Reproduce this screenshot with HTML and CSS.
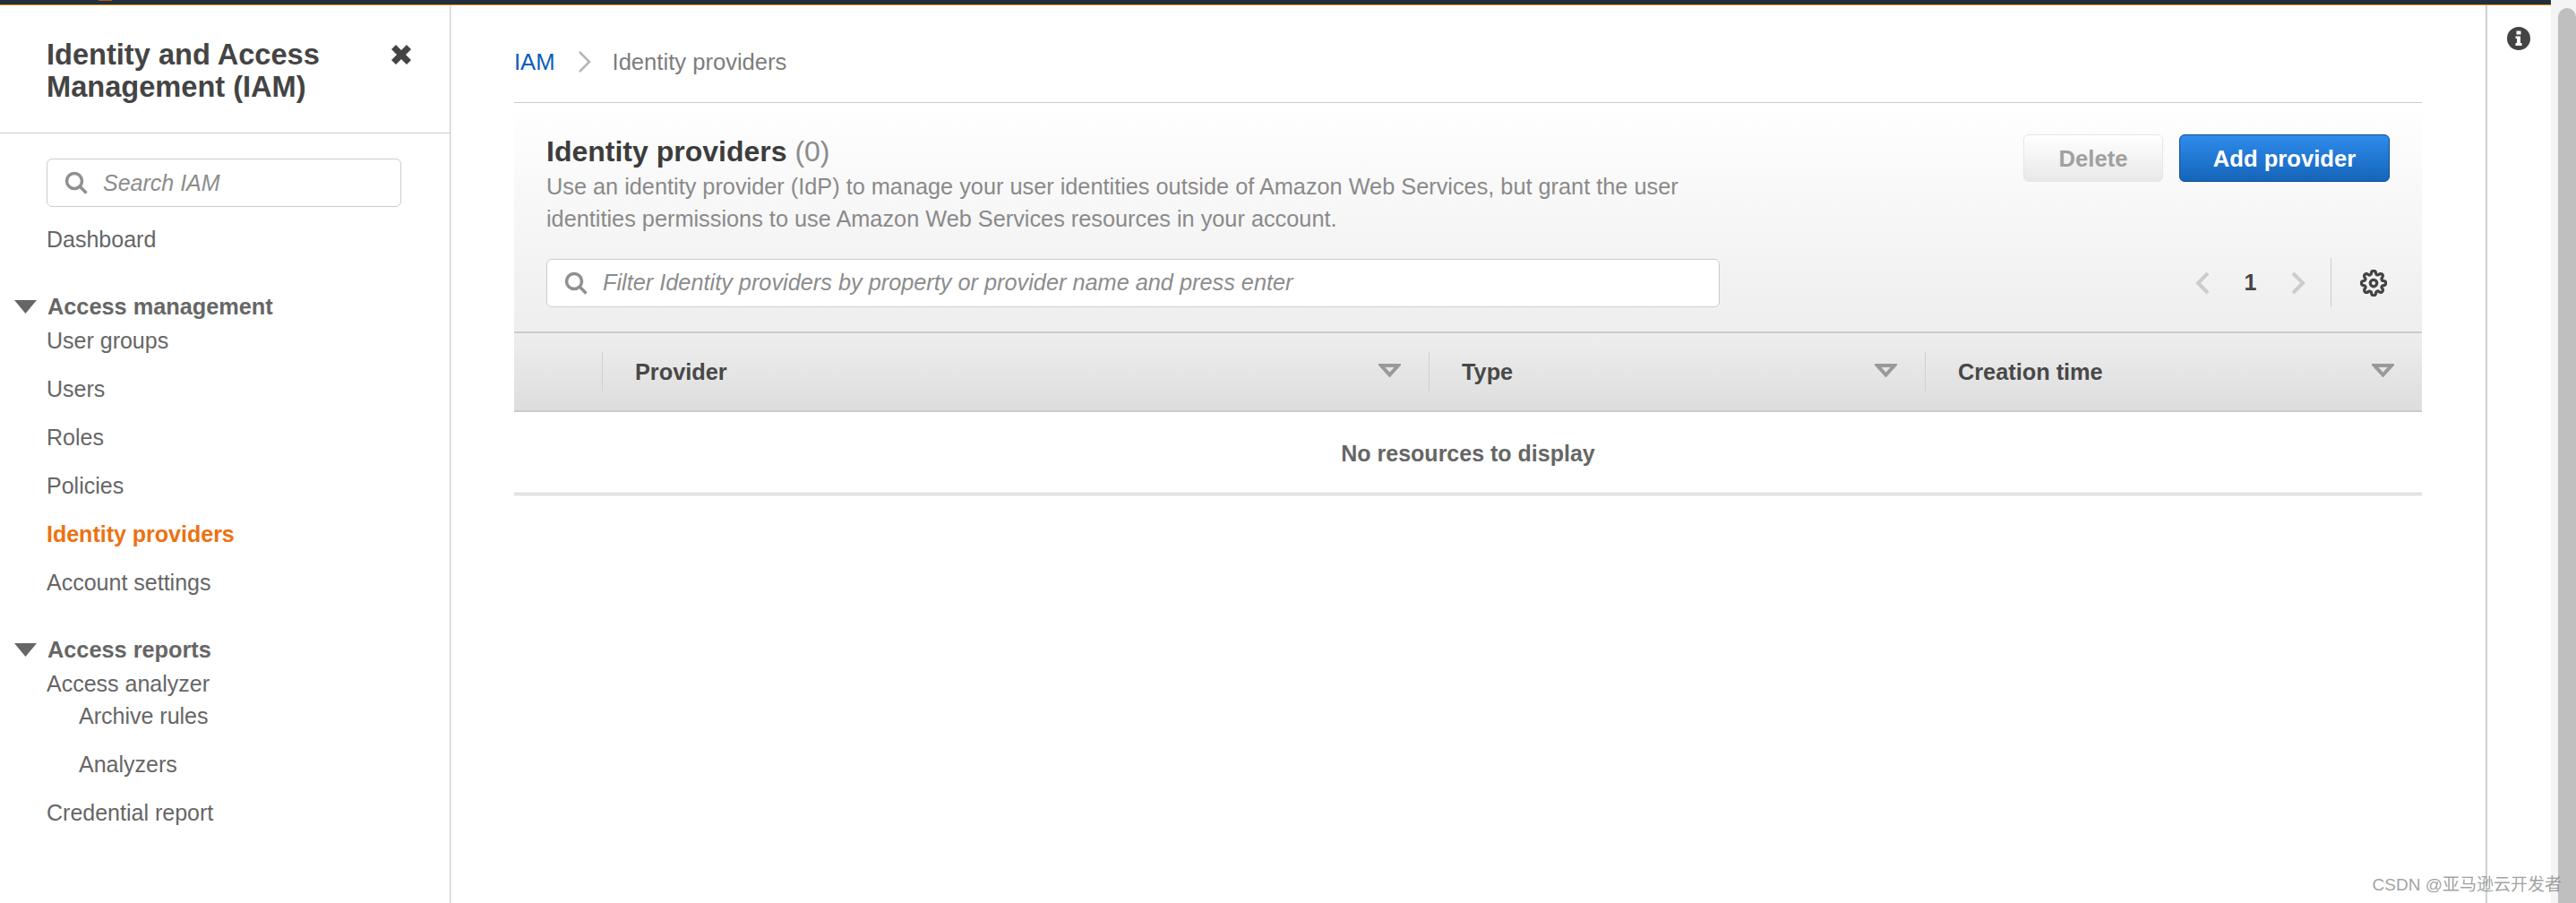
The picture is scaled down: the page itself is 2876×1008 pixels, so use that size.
FILE: index.html
```html
<!DOCTYPE html>
<html lang="en">
<head>
  <meta charset="UTF-8">
  <title>Identity providers</title>
  <link rel="stylesheet" href="styles.css">
</head>
<body>
  <div class="page">
    <div class="app">
      <div class="topbar"><span class="topbar-logo"></span></div>
      <div class="layout">
        <aside class="sidebar">
          <div class="sidebar-head">
            <h2>Identity and Access Management (IAM)</h2>
            <svg class="close-icon" viewBox="0 0 22 22"><path d="M5 0l6 6 6-6 5 5-6 6 6 6-5 5-6-6-6 6-5-5 6-6-6-6z"/></svg>
          </div>
          <nav class="sidebar-nav">
            <div class="search-box side-search">
              <svg class="search-icon" viewBox="0 0 26 26"><circle cx="11" cy="11" r="8.5"/><path d="M17 17l7.5 7.5"/></svg>
              <span>Search IAM</span>
            </div>
            <a href="#" class="nav-link">Dashboard</a>

            <div class="nav-title">
              <svg class="caret" viewBox="0 0 25 15"><path d="M0 0h25L12.5 15z"/></svg>
              Access management
            </div>
            <a href="#" class="nav-link">User groups</a>
            <a href="#" class="nav-link">Users</a>
            <a href="#" class="nav-link">Roles</a>
            <a href="#" class="nav-link">Policies</a>
            <a href="#" class="nav-link active">Identity providers</a>
            <a href="#" class="nav-link">Account settings</a>

            <div class="nav-title">
              <svg class="caret" viewBox="0 0 25 15"><path d="M0 0h25L12.5 15z"/></svg>
              Access reports
            </div>
            <a href="#" class="nav-link parent">Access analyzer</a>
            <a href="#" class="nav-link sub">Archive rules</a>
            <a href="#" class="nav-link sub">Analyzers</a>
            <a href="#" class="nav-link">Credential report</a>
          </nav>
        </aside>

        <main class="content">
          <div class="breadcrumb">
            <a href="#">IAM</a>
            <svg class="crumb-sep" viewBox="0 0 16 26"><path d="M2 2l11 11L2 24"/></svg>
            <span>Identity providers</span>
          </div>

          <section class="panel">
            <div class="panel-top">
              <div class="panel-text">
                <h1>Identity providers <span class="count">(0)</span></h1>
                <p>Use an identity provider (IdP) to manage your user identities outside of Amazon Web Services, but grant the user identities permissions to use Amazon Web Services resources in your account.</p>
              </div>
              <div class="panel-actions">
                <button class="btn btn-disabled">Delete</button>
                <button class="btn btn-primary">Add provider</button>
              </div>
            </div>
            <div class="panel-tools">
              <div class="search-box filter-search">
                <svg class="search-icon" viewBox="0 0 26 26"><circle cx="11" cy="11" r="8.5"/><path d="M17 17l7.5 7.5"/></svg>
                <span>Filter Identity providers by property or provider name and press enter</span>
              </div>
              <div class="pager">
                <svg class="chevron" viewBox="0 0 16 26"><path d="M14 2L3 13l11 11"/></svg>
                <span class="page-num">1</span>
                <svg class="chevron" viewBox="0 0 16 26"><path d="M2 2l11 11L2 24"/></svg>
                <span class="pager-sep"></span>
                <svg class="gear" viewBox="0 0 24 24"><circle cx="12" cy="12" r="3"/><path d="M19.4 15a1.65 1.65 0 0 0 .33 1.82l.06.06a2 2 0 0 1 0 2.83 2 2 0 0 1-2.83 0l-.06-.06a1.65 1.65 0 0 0-1.82-.33 1.65 1.65 0 0 0-1 1.51V21a2 2 0 0 1-2 2 2 2 0 0 1-2-2v-.09A1.65 1.65 0 0 0 9 19.4a1.65 1.65 0 0 0-1.82.33l-.06.06a2 2 0 0 1-2.83 0 2 2 0 0 1 0-2.83l.06-.06a1.65 1.65 0 0 0 .33-1.82 1.65 1.65 0 0 0-1.51-1H3a2 2 0 0 1-2-2 2 2 0 0 1 2-2h.09A1.65 1.65 0 0 0 4.6 9a1.65 1.65 0 0 0-.33-1.82l-.06-.06a2 2 0 0 1 0-2.83 2 2 0 0 1 2.83 0l.06.06a1.65 1.65 0 0 0 1.82.33H9a1.65 1.65 0 0 0 1-1.51V3a2 2 0 0 1 2-2 2 2 0 0 1 2 2v.09a1.65 1.65 0 0 0 1 1.51 1.65 1.65 0 0 0 1.82-.33l.06-.06a2 2 0 0 1 2.83 0 2 2 0 0 1 0 2.83l-.06.06a1.65 1.65 0 0 0-.33 1.82V9a1.65 1.65 0 0 0 1.51 1H21a2 2 0 0 1 2 2 2 2 0 0 1-2 2h-.09a1.65 1.65 0 0 0-1.51 1z"/></svg>
              </div>
            </div>
          </section>

          <div class="table-head">
            <div class="th th-select"></div>
            <div class="th"><span>Provider</span><svg class="sort" viewBox="0 0 25 15"><path d="M3 2h19l-9.500 10.500z"/></svg></div>
            <div class="th"><span>Type</span><svg class="sort" viewBox="0 0 25 15"><path d="M3 2h19l-9.500 10.500z"/></svg></div>
            <div class="th"><span>Creation time</span><svg class="sort" viewBox="0 0 25 15"><path d="M3 2h19l-9.500 10.500z"/></svg></div>
          </div>
          <div class="table-empty">No resources to display</div>
        </main>

        <aside class="helper">
          <svg class="info-icon" viewBox="0 0 26 26"><path fill-rule="evenodd" d="M13 0a13 13 0 1 1 0 26a13 13 0 0 1 0-26zM10.500 4.500v4h5v-4zM9.500 10.500v2.500h1.500v5h-1.500v3h7v-3h-1.500v-7.500z"/></svg>
        </aside>
      </div>
    </div>
    <div class="scrollbar"><div class="thumb"></div></div>
  </div>
  <div class="watermark">CSDN @亚马逊云开发者</div>
</body>
</html>
```

FILE: styles.css
```css
* {
  box-sizing: border-box;
}

html, body {
  margin: 0;
  height: 100%;
  overflow: hidden;
}

body {
  font-family: "Liberation Sans", "Noto Sans CJK SC", sans-serif;
  font-size: 25px;
  color: #666;
  background: #fff;
}

a {
  text-decoration: none;
}

.page {
  display: flex;
  height: 1008px;
}

.app {
  flex: 1;
  display: flex;
  flex-direction: column;
  min-width: 0;
}

.topbar {
  height: 6px;
  background: #232f3e;
  border-bottom: 1px solid #ec9a1c;
}

.topbar-logo {
  display: block;
  width: 15px;
  height: 1px;
  margin-left: 110px;
  background: #b5561c;
}

.layout {
  flex: 1;
  display: flex;
  min-height: 0;
}

/* sidebar */
.sidebar {
  width: 503px;
  flex-shrink: 0;
  border-right: 1px solid #c8cccc;
  box-shadow: 2px 0 2px rgba(0, 0, 0, 0.04);
}

.sidebar-head {
  display: flex;
  justify-content: space-between;
  height: 143px;
  padding: 37px 43px 0 52px;
  border-bottom: 1px solid #ccc;
}

.sidebar-head h2 {
  margin: 0;
  width: 345px;
  font-size: 32.6px;
  line-height: 36px;
  font-weight: 700;
  color: #444;
}

.close-icon {
  width: 22px;
  height: 22px;
  margin-top: 7px;
  fill: #444;
}

.sidebar-nav {
  display: flex;
  flex-direction: column;
  padding: 28px 0 0;
}

.search-box {
  display: flex;
  align-items: center;
  height: 54px;
  background: #fff;
  border: 1px solid #ccc;
  border-radius: 6px;
  font-style: italic;
  color: #8c8c8c;
}

.search-icon {
  flex-shrink: 0;
  width: 26px;
  height: 26px;
  fill: none;
  stroke: #909090;
  stroke-width: 3.5;
}

.side-search {
  width: 396px;
  margin: 0 0 18px 52px;
  padding-left: 19px;
  gap: 17px;
}

.nav-link {
  height: 36px;
  line-height: 36px;
  margin: 0 0 18px 52px;
  color: #666;
}

.nav-link.active {
  color: #ec7211;
  font-weight: 700;
}

.nav-link.parent {
  margin-bottom: 0;
}

.nav-link.sub {
  margin-left: 88px;
}

.nav-title {
  display: flex;
  align-items: center;
  height: 28px;
  margin: 25px 0 6px 16px;
  font-size: 25.3px;
  font-weight: 700;
  color: #666;
}

.caret {
  width: 25px;
  height: 15px;
  margin-right: 12px;
  fill: #666;
}

/* main */
.content {
  flex: 1;
  min-width: 0;
  padding: 0 71px;
}

.breadcrumb {
  display: flex;
  align-items: center;
  height: 109px;
  padding-top: 18px;
  font-size: 25.6px;
  color: #7d7d7d;
  border-bottom: 1px solid #ccc;
}

.breadcrumb a {
  color: #0a5dbd;
}

.crumb-sep {
  width: 16px;
  height: 26px;
  margin: 0 23px 0 25px;
  fill: none;
  stroke: #b5b5b5;
  stroke-width: 2.5;
}

.panel {
  height: 257px;
  padding: 35px 36px 0;
  background: linear-gradient(#fff, #eee);
  border-bottom: 2px solid #ccc;
}

.panel-top {
  display: flex;
  justify-content: space-between;
  height: 138px;
}

.panel-text {
  width: 1290px;
}

.panel-text h1 {
  margin: 0;
  font-size: 32px;
  line-height: 38px;
  font-weight: 700;
  color: #3c3c3c;
}

.count {
  font-weight: 400;
  color: #8c8c8c;
}

.panel-text p {
  margin: 2px 0 0;
  font-size: 25.3px;
  line-height: 36px;
  color: #8a8a8a;
}

.panel-actions {
  display: flex;
  gap: 18px;
}

.btn {
  height: 53px;
  padding-top: 3px;
  font-family: inherit;
  font-size: 25.6px;
  font-weight: 700;
  border-radius: 6px;
  cursor: pointer;
}

.btn-disabled {
  width: 156px;
  color: #a0a0a0;
  background: linear-gradient(#fff, #e8e8e8);
  border: 1px solid #e6e6e6;
}

.btn-primary {
  width: 235px;
  color: #fff;
  background: linear-gradient(#2f8beb, #1465b8);
  border: 1px solid #0d4f99;
}

.panel-tools {
  display: flex;
  justify-content: space-between;
  align-items: center;
}

.filter-search {
  width: 1310px;
  padding-left: 19px;
  gap: 17px;
  font-size: 25.3px;
}

.pager {
  display: flex;
  align-items: center;
  height: 55px;
  margin-right: 3px;
}

.chevron {
  width: 16px;
  height: 26px;
  fill: none;
  stroke: #ccc;
  stroke-width: 4;
}

.page-num {
  width: 91px;
  text-align: center;
  font-size: 25px;
  font-weight: 700;
  color: #444;
}

.pager-sep {
  width: 1px;
  height: 55px;
  margin: 0 32px 0 28px;
  background: #ccc;
}

.gear {
  width: 30px;
  height: 30px;
  fill: none;
  stroke: #444;
  stroke-width: 2.600;
}

/* table */
.table-head {
  display: grid;
  grid-template-columns: 98px 923px 554px 555px;
  align-items: center;
  height: 88px;
  font-size: 25.3px;
  background: linear-gradient(#eee, #ddd);
  border-bottom: 2px solid #ccc;
}

.th {
  display: flex;
  justify-content: space-between;
  align-items: center;
  height: 44px;
  padding: 0 31px 0 36px;
  border-left: 1px solid #d0d0d0;
  font-weight: 700;
  color: #484848;
}

.th-select {
  border-left: 0;
}

.sort {
  width: 25px;
  height: 15px;
  margin-top: -3px;
  fill: none;
  stroke: #999;
  stroke-width: 4;
}

.table-empty {
  height: 93px;
  line-height: 92px;
  text-align: center;
  font-weight: 700;
  color: #666;
  border-bottom: 3px double #ccc;
}

/* right rail */
.helper {
  width: 73px;
  flex-shrink: 0;
  border-left: 2px solid #ccd0d0;
  padding: 24px 0 0 22px;
}

.info-icon {
  display: block;
  width: 26px;
  height: 26px;
  fill: #444;
}

.scrollbar {
  width: 28px;
  flex-shrink: 0;
  padding: 9px 0 0 8px;
  background: #f4f4f4;
}

.thumb {
  height: 100%;
  background: #bfbfbf;
  border-radius: 10px 10px 0 0;
}

.watermark {
  position: absolute;
  right: 16px;
  bottom: 6px;
  font-size: 19px;
  line-height: 28px;
  color: rgba(120, 120, 120, 0.7);
}
```
